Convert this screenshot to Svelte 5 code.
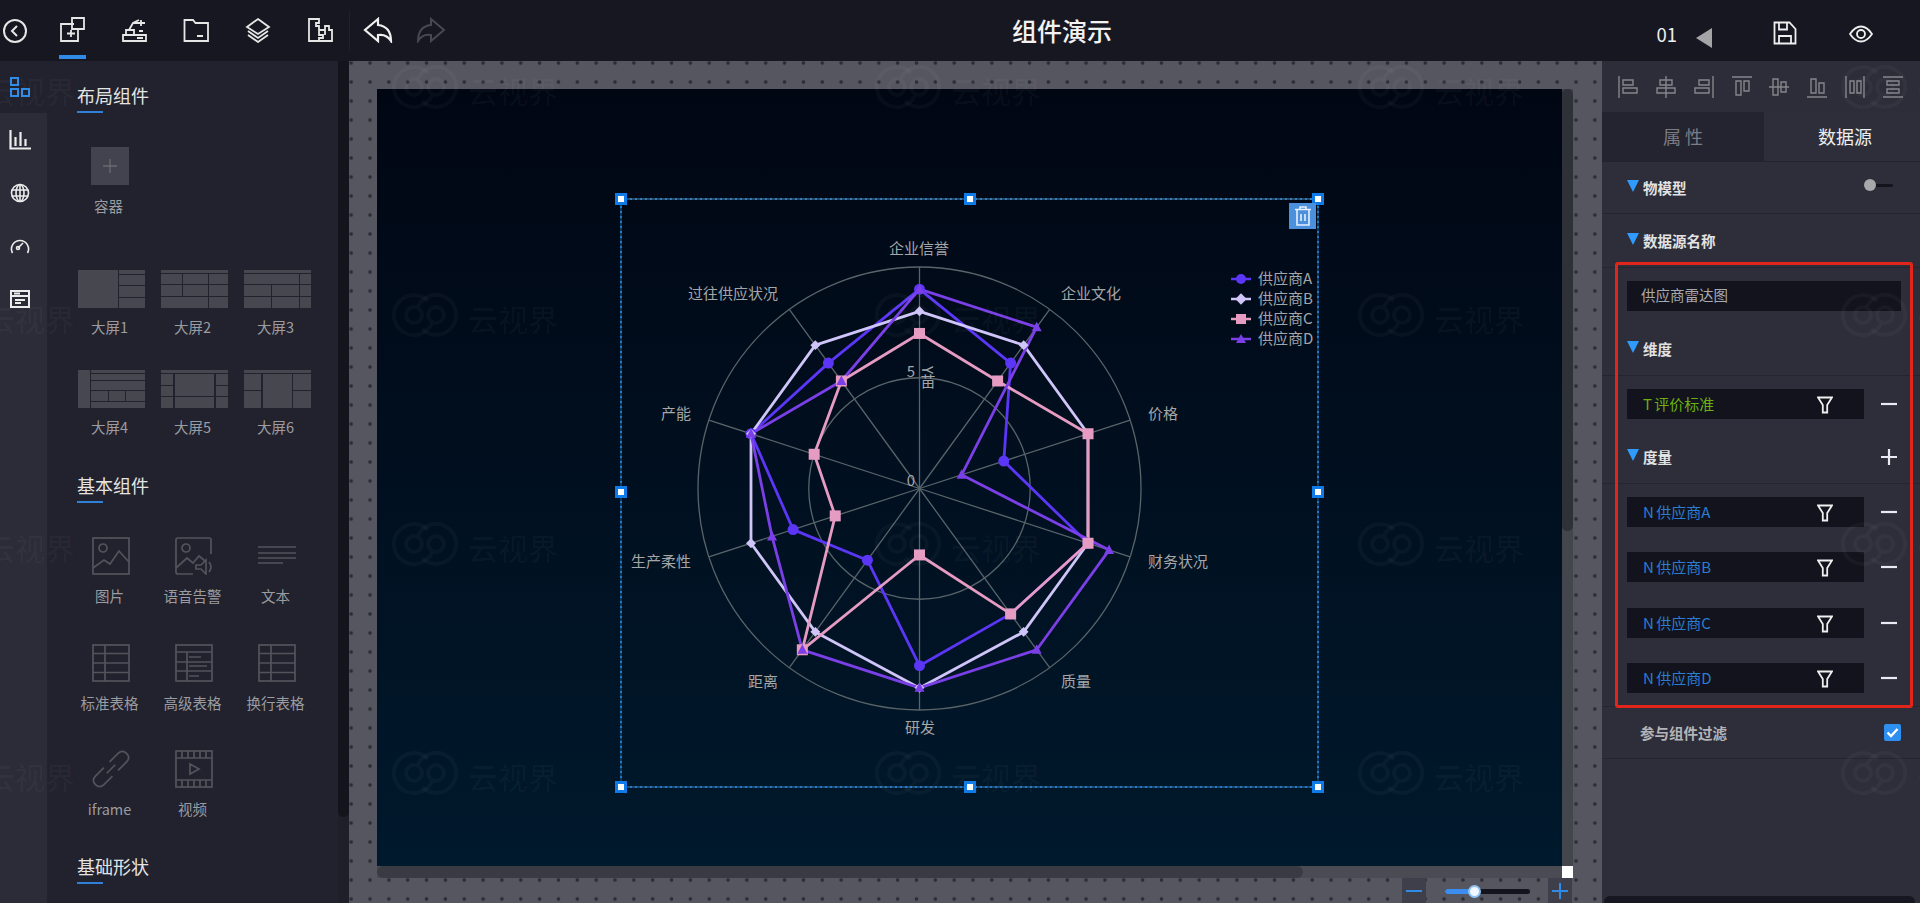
<script>
  const axes = ['企业信誉','企业文化','价格','财务状况','质量','研发','距离','生产柔性','产能','过往供应状况'];
  const labels = [
    { t: axes[0], x: 919, y: 247, a: 'middle' },
    { t: axes[1], x: 1061, y: 292.5, a: 'start' },
    { t: axes[2], x: 1148, y: 412.5, a: 'start' },
    { t: axes[3], x: 1148, y: 560.5, a: 'start' },
    { t: axes[4], x: 1061, y: 680.5, a: 'start' },
    { t: axes[5], x: 920, y: 726.5, a: 'middle' },
    { t: axes[6], x: 778, y: 680.5, a: 'end' },
    { t: axes[7], x: 691, y: 560.5, a: 'end' },
    { t: axes[8], x: 691, y: 412.5, a: 'end' },
    { t: axes[9], x: 778, y: 292.5, a: 'end' }
  ];
  const cx = 919.5, cy = 488.5, R = 221.5;
  const pt = (i, v) => {
    const a = (i * 36 * Math.PI) / 180, r = (v / 10) * R;
    return [cx + r * Math.sin(a), cy - r * Math.cos(a)];
  };
  const series = [
    { name: '供应商A', color: '#5b36f6', kind: 'circle', v: [9,7,4,8,7,8,4,6,8,7] },
    { name: '供应商B', color: '#cfc5f8', kind: 'diamond', v: [8,8,8,8,8,9,8,8,8,8] },
    { name: '供应商C', color: '#e69bc3', kind: 'square', v: [7,6,8,8,7,3,9,4,5,6] },
    { name: '供应商D', color: '#7a3fe6', kind: 'triangle', v: [9,9,2,9,9,9,9,7,8,6] }
  ];
  const poly = (v) => v.map((n, i) => pt(i, n).map((c) => c.toFixed(1)).join(',')).join(' ');
  const handles = [[1,1],[349.5,1],[698,1],[1,294],[698,294],[1,589],[349.5,589],[698,589]];

  const wmX = [-91, 392, 875, 1358, 1841];
  const wmY = [87, 315, 544, 773];
  const ringA = (x, y) => `M${x + 36} ${y - 14}A20 20 0 1 0 ${x + 40} ${y + 8.5}`;
  const ringB = (x, y) => `M${x + 30} ${y + 14}A20 20 0 1 0 ${x + 26} ${y - 8.5}`;

  const screens = [
    { n: '大屏1', r: [[0,0,40,38],[41,0,26,4],[41,5,26,10],[41,16,26,11],[41,28,26,10]] },
    { n: '大屏2', r: [[0,0,67,3],[0,4,21,10],[22,4,25,10],[48,4,19,10],[0,15,21,11],[22,15,25,11],[48,15,19,11],[0,27,47,11],[48,27,19,11]] },
    { n: '大屏3', r: [[0,0,67,3],[0,4,55,10],[56,4,11,10],[0,15,27,11],[28,15,27,11],[56,15,11,11],[0,27,27,11],[28,27,27,11],[56,27,11,11]] },
    { n: '大屏4', r: [[0,0,12,38],[13,0,54,3],[13,4,54,6],[13,11,54,9],[13,21,17,10],[31,21,16,10],[48,21,19,10],[13,32,54,6]] },
    { n: '大屏5', r: [[0,0,67,3],[0,4,12,11],[0,16,12,10],[0,27,12,11],[14,4,39,22],[14,27,39,11],[55,4,12,11],[55,16,12,10],[55,27,12,11]] },
    { n: '大屏6', r: [[0,0,67,3],[0,4,17,16],[0,21,17,17],[19,4,29,34],[49,4,18,16],[49,21,18,17]] }
  ];
  const aligns = [
    'M1 0V22M5 4H15V9H5ZM5 12H19V17H5Z',
    'M10 0V22M4 4H16V9H4ZM1 12H19V17H1Z',
    'M19 0V22M5 4H15V9H5ZM1 12H15V17H1Z',
    'M0 1H20M4 5V19H9V5ZM12 5V15H17V5Z',
    'M0 11H20M4 3V19H9V3ZM12 6V16H17V6Z',
    'M0 21H20M4 3V17H9V3ZM12 7V17H17V7Z',
    'M1 0V22M19 0V22M5 5V17H9V5ZM12 5V17H16V5Z',
    'M0 1H20M0 21H20M4 5H16V9H4ZM4 13H16V17H4Z'
  ];
  const measures = ['供应商A','供应商B','供应商C','供应商D'];
</script>

{#snippet funnel()}
  <svg class="funnel" width="16" height="18" viewBox="0 0 16 18"><path d="M1 1.500H15L10.200 9V16.500H5.800V9Z" /></svg>
{/snippet}

{#snippet tri()}
  <svg class="tri" width="12" height="12" viewBox="0 0 12 12"><path d="M0 0H12L6 12Z" /></svg>
{/snippet}

<div class="app">
  <header class="top">
    <div class="tools">
      <svg class="back" width="24" height="24" viewBox="0 0 24 24"><circle cx="12" cy="12" r="11" /><path d="M14 7L9 12L14 17" /></svg>
      <div class="tool active">
        <svg width="26" height="26" viewBox="0 0 26 26"><path d="M15 7H2V24H19V11M12 13V20M8 16.500H16M13 1H25V12H13Z" /></svg>
      </div>
      <div class="tool">
        <svg width="26" height="26" viewBox="0 0 26 26"><path d="M2 24H25V18H2ZM5 18V13H13V18M8 13L12 6L18 3M12 6H24M20 3V9M16 21H22M18 14H22" /></svg>
      </div>
      <div class="tool">
        <svg width="26" height="26" viewBox="0 0 26 26"><path d="M1.500 3H10L12.500 6H25V24H1.500ZM14 19H20" /></svg>
      </div>
      <div class="tool">
        <svg width="26" height="26" viewBox="0 0 26 26"><path d="M13 2L24 10L13 17L2 10ZM3 14L13 21L23 14M3 18L13 25L23 18" /></svg>
      </div>
      <div class="tool">
        <svg width="26" height="26" viewBox="0 0 26 26"><path d="M2 24V2H12V6H9V9H12V13H18V9H22V13H25V24ZM12 13V18H16V21H12V24M18 13V18" /></svg>
      </div>
      <span class="sep"></span>
      <svg class="undo" width="30" height="26" viewBox="0 0 30 26"><path d="M15 2L2 13L15 24V18C21 17 25 19 28 24C28 15 24 9 15 8Z" /></svg>
      <svg class="redo" width="30" height="26" viewBox="0 0 30 26"><path d="M15 2L28 13L15 24V18C9 17 5 19 2 24C2 15 6 9 15 8Z" /></svg>
    </div>
    <h1>组件演示</h1>
    <div class="top-right">
      <span class="num">01</span>
      <svg class="play" width="16" height="20" viewBox="0 0 16 20"><path d="M16 0V20L0 10Z" /></svg>
      <svg class="save" width="24" height="24" viewBox="0 0 24 24"><path d="M1.500 1.500H16.500L22.500 8V22.500H1.500ZM6 1.500V8.500H14V1.500M6 22.500V15H18V22.500" /></svg>
      <svg class="eye" width="24" height="20" viewBox="0 0 24 20"><path d="M1 10C5 4 8.500 2.500 12 2.500S19 4 23 10C19 16 15.500 17.500 12 17.500S5 16 1 10Z" /><circle cx="12" cy="10" r="4" /></svg>
    </div>
  </header>

  <div class="body">
    <nav class="rail">
      <div class="rail-item on">
        <svg width="20" height="20" viewBox="0 0 20 20"><path d="M1 1H8V8H1ZM1 12H8V19H1ZM12 12H19V19H12Z" /></svg>
      </div>
      <div class="rail-item bars">
        <svg width="22" height="20" viewBox="0 0 22 20"><path d="M1.500 0V18.500H22M6.500 7V16M11.500 2V16M16.500 9V16" /></svg>
      </div>
      <div class="rail-item">
        <svg width="20" height="20" viewBox="0 0 20 20"><circle cx="10" cy="10" r="8.500" /><ellipse cx="10" cy="10" rx="4" ry="8.500" /><path d="M2 7H18M2 13H18M10 1.500V18.500" /></svg>
      </div>
      <div class="rail-item">
        <svg width="20" height="18" viewBox="0 0 20 18"><path d="M2.500 16A8.500 8.500 0 1 1 17.500 16M8 11L13 6" /><circle cx="8" cy="11" r="1.500" /></svg>
      </div>
      <div class="rail-item">
        <svg width="20" height="18" viewBox="0 0 20 18"><path d="M1 1H19V17H1ZM1 6H19M4 3.500H10M5 10H15M5 13H11" /></svg>
      </div>
    </nav>

    <aside class="panel">
      <div class="panel-inner">
        <h3 class="title">布局组件</h3>
        <div class="cells one">
          <div class="cell">
            <div class="plus-tile">
              <svg width="14" height="14" viewBox="0 0 14 14"><path d="M7 0V14M0 7H14" /></svg>
            </div>
            <span>容器</span>
          </div>
        </div>
        <div class="cells screens">
          {#each screens as s}
            <div class="cell">
              <svg class="tile" width="67" height="38" viewBox="0 0 67 38">
                {#each s.r as r}<rect x={r[0]} y={r[1]} width={r[2]} height={r[3]} />{/each}
              </svg>
              <span>{s.n}</span>
            </div>
          {/each}
        </div>
        <h3 class="title t2">基本组件</h3>
        <div class="cells basics">
          <div class="cell">
            <svg class="ic" width="38" height="38" viewBox="0 0 38 38"><rect x="1" y="1" width="36" height="36" /><circle cx="11" cy="11" r="4" /><path d="M1 31L12 23L18 27L27 14L37 25" /></svg>
            <span>图片</span>
          </div>
          <div class="cell">
            <svg class="ic" width="38" height="38" viewBox="0 0 38 38"><path d="M18 37H3Q1 37 1 35V3Q1 1 3 1H34Q36 1 36 3V17" /><circle cx="11" cy="11" r="4" /><path d="M1 31L12 21L18 26L24 19L30 24" /><path d="M21 28H26L31 23V37L26 32H21ZM34 25Q38 30 34 35" /></svg>
            <span>语音告警</span>
          </div>
          <div class="cell">
            <svg class="ic" width="38" height="38" viewBox="0 0 38 38"><path d="M0 10H38M0 16H38M0 21H38M0 26H25" /></svg>
            <span>文本</span>
          </div>
          <div class="cell">
            <svg class="ic" width="38" height="38" viewBox="0 0 38 38"><rect x="1" y="1" width="36" height="36" /><path d="M1 9.500H37M1 19H37M1 28.500H37M13 1V37" /></svg>
            <span>标准表格</span>
          </div>
          <div class="cell">
            <svg class="ic" width="38" height="38" viewBox="0 0 38 38"><rect x="1" y="1" width="36" height="36" /><path d="M1 8H37M12 8V37M1 18H12M1 27H12M12 27H37M12 18H37M14 13H26M14 22H32M14 32H24" /></svg>
            <span>高级表格</span>
          </div>
          <div class="cell">
            <svg class="ic" width="38" height="38" viewBox="0 0 38 38"><rect x="1" y="1" width="36" height="36" /><path d="M1 9.500H37M1 19H37M1 28.500H37M13 1V37" /></svg>
            <span>换行表格</span>
          </div>
          <div class="cell">
            <svg class="ic" width="38" height="38" viewBox="0 0 38 38"><g transform="rotate(-45 19 19)"><path d="M15 13H3Q-3 13 -3 19T3 25H15M23 13H35Q41 13 41 19T35 25H23M13 19H25" /></g></svg>
            <span>iframe</span>
          </div>
          <div class="cell">
            <svg class="ic" width="38" height="38" viewBox="0 0 38 38"><rect x="1" y="1" width="36" height="36" /><path d="M1 8H37M1 30H37M7 1V8M13 1V8M19 1V8M25 1V8M31 1V8M7 30V37M13 30V37M19 30V37M25 30V37M31 30V37M15 14L24 19L15 24Z" /></svg>
            <span>视频</span>
          </div>
        </div>
        <h3 class="title t3">基础形状</h3>
      </div>
      <div class="panel-scroll"><div class="panel-thumb"></div></div>
    </aside>

    <main class="stage">
      <div class="canvas">
        <div class="widget">
          <svg class="chart" width="699" height="590" viewBox="620 198 699 590">
            <g class="grid">
              <circle cx={cx} cy={cy} r={R / 2} />
              <circle cx={cx} cy={cy} r={R} />
              {#each axes as _, i}
                {@const p = pt(i, 10)}
                <line x1={cx} y1={cy} x2={p[0]} y2={p[1]} />
              {/each}
            </g>
            {#each series as s}
              <polygon class="line" points={poly(s.v)} stroke={s.color} />
            {/each}
            {#each series as s}
              {#each s.v as n, i}
                {@const p = pt(i, n)}
                {#if s.kind === 'circle'}
                  <circle cx={p[0]} cy={p[1]} r="5.5" fill={s.color} />
                {:else if s.kind === 'diamond'}
                  <rect x={p[0] - 3.5} y={p[1] - 3.5} width="7" height="7" fill={s.color} transform="rotate(45 {p[0]} {p[1]})" />
                {:else if s.kind === 'square'}
                  <rect x={p[0] - 5.5} y={p[1] - 5.5} width="11" height="11" fill={s.color} />
                {:else}
                  <path d="M{p[0]} {p[1] - 5.5}L{p[0] + 5} {p[1] + 4}H{p[0] - 5}Z" fill={s.color} />
                {/if}
              {/each}
            {/each}
            {#each labels as l}
              <text class="lbl" x={l.x} y={l.y} text-anchor={l.a} dominant-baseline="central">{l.t}</text>
            {/each}
            <text class="lbl" x="911" y="370" text-anchor="middle" dominant-baseline="central">5</text>
            <text class="lbl" x="911" y="479" text-anchor="middle" dominant-baseline="central">0</text>
            <text class="lbl yname" x="928" y="366">Y苗</text>
            {#each series as s, i}
              {@const y = 279 + i * 20}
              <line x1="1231" x2="1251" y1={y} y2={y} stroke={s.color} stroke-width="2.5" />
              {#if s.kind === 'circle'}
                <circle cx="1241" cy={y} r="5" fill={s.color} />
              {:else if s.kind === 'diamond'}
                <rect x="1237" y={y - 4} width="8" height="8" fill={s.color} transform="rotate(45 1241 {y})" />
              {:else if s.kind === 'square'}
                <rect x="1236" y={y - 5} width="10" height="10" fill={s.color} />
              {:else}
                <path d="M1241 {y - 5}L1246 {y + 4}H1236Z" fill={s.color} />
              {/if}
              <text class="lbl" x="1258" y={y - 1.5} dominant-baseline="central">{s.name}</text>
            {/each}
          </svg>
          {#each handles as h}
            <span class="handle" style="left:{h[0] - 6}px;top:{h[1] - 6}px"></span>
          {/each}
          <div class="trash">
            <svg width="18" height="20" viewBox="0 0 18 20"><path d="M1 3.500H17M6 3V1H12V3M3 4V19H15V4M7 8V15M11 8V15" /></svg>
          </div>
        </div>
      </div>
      <div class="vscroll"><div class="vthumb"></div></div>
      <div class="hscroll"><div class="hthumb"></div></div>
      <div class="corner"></div>
      <div class="zoombar">
        <div class="zbtn"><svg width="18" height="14" viewBox="0 0 18 14"><path d="M1 7H17" /></svg></div>
        <div class="slider"><div class="fill"></div><div class="knob"></div></div>
        <div class="zbtn"><svg width="18" height="18" viewBox="0 0 18 18"><path d="M1 9H17M9 1V17" /></svg></div>
      </div>
    </main>

    <aside class="right">
      <div class="aligns">
        {#each aligns as d}
          <svg width="20" height="22" viewBox="0 0 20 22"><path d={d} /></svg>
        {/each}
      </div>
      <div class="tabs">
        <div class="tab off">属 性</div>
        <div class="tab on">数据源</div>
      </div>
      <div class="head h52">
        {@render tri()}<b>物模型</b>
        <div class="switch"><i></i></div>
      </div>
      <div class="head h54">{@render tri()}<b>数据源名称</b></div>
      <div class="group solo">
        <div class="input">供应商雷达图</div>
      </div>
      <div class="head h65">{@render tri()}<b>维度</b></div>
      <div class="group">
        <div class="frow">
          <div class="field green"><span>T 评价标准</span>{@render funnel()}</div>
          <svg class="pm" width="18" height="18" viewBox="0 0 18 18"><path d="M1 9H17" /></svg>
        </div>
      </div>
      <div class="head h65">
        {@render tri()}<b>度量</b>
        <svg class="pm push" width="18" height="18" viewBox="0 0 18 18"><path d="M1 9H17M9 1V17" /></svg>
      </div>
      <div class="group many">
        {#each measures as m}
          <div class="frow">
            <div class="field blue"><span>N {m}</span>{@render funnel()}</div>
            <svg class="pm" width="18" height="18" viewBox="0 0 18 18"><path d="M1 9H17" /></svg>
          </div>
        {/each}
      </div>
      <div class="check-row">
        <b>参与组件过滤</b>
        <div class="check"><svg width="13" height="11" viewBox="0 0 13 11"><path d="M1.500 5.500L5 9L11.500 2" /></svg></div>
      </div>
      <div class="foot"></div>
    </aside>
  </div>

  <svg class="wm" width="1920" height="903" viewBox="0 0 1920 903">
    {#each wmY as y}
      {#each wmX as x}
        <path d={ringA(x, y)} />
        <path d={ringB(x, y)} />
        <circle cx={x + 22} cy={y} r="8" />
        <circle cx={x + 44} cy={y} r="8" />
        <text x={x + 76} y={y + 3} dominant-baseline="central">云视界</text>
      {/each}
    {/each}
  </svg>
  <div class="redbox"></div>
</div>

<style>
  :global(body) { margin: 0; background: #171722; }
  .app {
    position: relative;
    width: 1920px;
    height: 903px;
    overflow: hidden;
    display: grid;
    grid-template-rows: 61px 1fr;
    font-family: "Noto Sans CJK SC", "Noto Sans", sans-serif;
    color: #a9a9ad;
  }
  svg { display: block; fill: none; }

  .top {
    position: relative;
    background: #171722;
    display: flex;
    align-items: center;
    justify-content: space-between;
  }
  .tools { display: flex; align-items: center; padding-left: 3px; height: 100%; }
  .back { stroke: #e6e6e6; stroke-width: 2; margin-right: 31px; }
  .tool {
    width: 62px;
    height: 100%;
    display: flex;
    align-items: center;
    justify-content: flex-start;
    padding-bottom: 2px;
    box-sizing: border-box;
    position: relative;
    left: 1px;
  }
  .tool svg { stroke: #e6e6e6; stroke-width: 1.800; }
  .tool.active::after {
    content: '';
    position: absolute;
    left: 0;
    bottom: 2px;
    width: 27px;
    height: 4px;
    background: #2f8be6;
  }
  .sep { width: 1px; height: 40px; background: #20202b; margin-left: -19px; }
  .undo { stroke: #f0f0f0; stroke-width: 2.200; margin-left: 13px; margin-top: -1px; }
  .redo { stroke: #484853; stroke-width: 2; margin-left: 23px; margin-top: -1px; }
  h1 {
    position: absolute;
    left: 0;
    width: 2124px;
    margin: 0;
    text-align: center;
    font-size: 25px;
    line-height: 61px;
    font-weight: 500;
    color: #f2f2f2;
  }
  .top-right { display: flex; align-items: center; height: 100%; padding-right: 47px; }
  .num { font-size: 18.500px; color: #f0f0f0; margin-top: 7px; }
  .play { fill: #a5a5a8; margin: 15px 0 0 19px; }
  .save { stroke: #eeeeee; stroke-width: 1.800; margin: 4px 0 0 61px; }
  .eye { stroke: #eeeeee; stroke-width: 1.800; margin: 7px 0 0 52px; }

  .body { display: flex; min-height: 0; }
  .rail { width: 47px; background: #2b2c38; flex: none; }
  .rail-item { height: 53px; display: flex; align-items: center; justify-content: center; padding-right: 7px; box-sizing: border-box; }
  .rail-item:first-child { height: 52px; background: #21222d; }
  .rail-item svg { stroke: #ececec; stroke-width: 1.600; }
  .rail-item.on svg { stroke: #2f8be6; stroke-width: 2; }
  .rail-item.bars svg { stroke-width: 2.200; }
  .rail-item:last-child svg { stroke-width: 2; }

  .panel { width: 302px; flex: none; display: flex; background: #21222d; }
  .panel-inner { width: 291px; padding: 21px 0 0 30px; box-sizing: border-box; overflow: hidden; }
  .title {
    margin: 0;
    font-size: 18px;
    line-height: 27px;
    height: 32px;
    font-weight: 400;
    color: #e4e4e4;
  }
  .title::after { content: ''; display: block; width: 26px; height: 2px; margin-top: 2px; background: #2f80d6; }
  .t2 { margin-top: 33px; }
  .t3 { margin-top: 32px; }
  .cells { display: grid; grid-template-columns: repeat(3, 83px); margin-left: -7.500px; }
  .one { margin-top: 33px; margin-left: -8.500px; }
  .screens { margin-top: 52px; row-gap: 31px; }
  .basics { margin-top: 33px; row-gap: 35.500px; }
  .cell { display: flex; flex-direction: column; align-items: center; }
  .cell span { font-size: 14.500px; line-height: 20px; margin-top: 11px; margin-bottom: 2px; margin-right: 3px; color: #9c9ca0; }
  .screens .cell span { margin-top: 9px; }
  .tile rect { fill: #474750; }
  .plus-tile { width: 38px; height: 38px; background: #42434e; display: flex; align-items: center; justify-content: center; }
  .plus-tile svg { stroke: #6a6a72; stroke-width: 1.300; }
  .ic { stroke: #53535c; stroke-width: 1.700; }
  .panel-scroll { width: 11px; background: #1f1f29; }
  .panel-thumb { height: 756px; background: #14141c; border-radius: 0 0 5px 5px; }

  .stage {
    flex: 1;
    min-width: 0;
    position: relative;
    padding: 28px 29px 0 28px;
    box-sizing: border-box;
    display: grid;
    grid-template-columns: 1fr 11px;
    grid-template-rows: 777px 12px 1fr;
    background-color: #565660;
    background-image: radial-gradient(circle, #2c2c35 1.500px, rgba(44,44,53,0) 2.200px);
    background-size: 18.850px 19px;
    background-position: 11.600px -7.500px;
  }
  .canvas { position: relative; background: linear-gradient(180deg, #010613 0%, #00192c 100%); }
  .widget {
    position: absolute;
    left: 243px;
    top: 109px;
    width: 699px;
    height: 590px;
    box-sizing: border-box;
    background-image:
      linear-gradient(90deg, #3a7cb8 50%, #22486a 50%),
      linear-gradient(90deg, #2a76c0 50%, #1a4a74 50%),
      linear-gradient(0deg, #1b79c9 50%, #103a5c 50%),
      linear-gradient(0deg, #1b79c9 50%, #103a5c 50%);
    background-size: 5px 2px, 5px 2px, 2px 5px, 2px 5px;
    background-repeat: repeat-x, repeat-x, repeat-y, repeat-y;
    background-position: 0 0, 0 100%, 0 0, 100% 0;
  }
  .chart { position: absolute; left: 0; top: 0; }
  .grid circle, .grid line { stroke: #59646a; stroke-width: 1.300; fill: none; }
  .line { fill: none; stroke-width: 2.800; stroke-linejoin: round; }
  .lbl { font-size: 15px; fill: #a4a6a8; font-family: "Noto Sans CJK SC", "Noto Sans", sans-serif; }
  .yname { writing-mode: vertical-rl; }
  .handle {
    position: absolute;
    width: 12px;
    height: 12px;
    box-sizing: border-box;
    background: #fff;
    border: 3px solid #0f7be8;
  }
  .trash {
    position: absolute;
    right: 3px;
    top: 5px;
    width: 27px;
    height: 26px;
    background: #4a90dc;
    display: flex;
    align-items: center;
    justify-content: center;
  }
  .trash svg { stroke: #e8f0fa; stroke-width: 1.600; }
  .vscroll { background: #44464e; }
  .vthumb { height: 442px; background: #2f3138; border-radius: 5px; }
  .hscroll { background: rgba(20,20,26,.16); }
  .hthumb { width: 926px; height: 100%; background: #3a3a42; border-radius: 6px; }
  .corner { background: #fff; }
  .zoombar { grid-column: 1 / 3; display: flex; justify-content: flex-end; align-items: stretch; gap: 18.500px; padding-right: 1px; }
  .zbtn { width: 24px; background: #3e3f4b; display: flex; align-items: center; justify-content: center; }
  .zbtn svg { stroke: #2f8be6; stroke-width: 2; }
  .slider { position: relative; width: 85px; height: 5px; margin-top: 11px; background: #14141e; border-radius: 3px; }
  .fill { width: 30px; height: 100%; background: #3b8df0; border-radius: 3px 0 0 3px; }
  .knob {
    position: absolute;
    left: 23px;
    top: -4px;
    width: 13px;
    height: 13px;
    box-sizing: border-box;
    border-radius: 50%;
    background: #f0f7ff;
    border: 2px solid #8cc2f5;
  }

  .right { width: 318px; flex: none; background: #2d2e3a; display: flex; flex-direction: column; }
  .aligns { height: 51px; display: flex; align-items: center; justify-content: space-between; padding: 0 17px 0 16px; background: #2c2d39; box-sizing: border-box; }
  .aligns svg { stroke: #85858c; stroke-width: 1.400; }
  .tabs { display: flex; height: 49px; border-bottom: 1px solid #23232d; }
  .tab { flex: 1; display: flex; align-items: center; justify-content: center; font-size: 18px; padding-bottom: 2px; box-sizing: border-box; color: #eeeeee; }
  .tab.on { padding-left: 6px; }
  .tab.off { flex: none; width: 162px; background: #23242f; color: #7c7c84; }
  .head {
    display: flex;
    align-items: flex-end;
    padding: 0 19px 16px 25px;
    box-sizing: border-box;
    border-bottom: 1px solid #25252f;
  }
  .h52 { height: 52px; padding-bottom: 15px; }
  .h54 { height: 54px; }
  .h65 { height: 65px; }
  .head b { font-size: 14.500px; line-height: 20px; color: #e2e2e2; margin-left: 4px; }
  .tri { fill: #2f9bff; margin-bottom: 6px; flex: none; }
  .switch { margin-left: auto; width: 29px; height: 13px; position: relative; margin-bottom: 6px; margin-right: 8px; }
  .switch::before { content: ''; position: absolute; left: 6px; right: 0; top: 5px; height: 3px; background: #14141e; border-radius: 2px; }
  .switch i { position: absolute; left: 0; top: 0; width: 12px; height: 12px; border-radius: 50%; background: #a8a8aa; }
  .group { padding: 13px 19px 0 25px; display: flex; flex-direction: column; gap: 25.300px; }
  .group.solo { padding-bottom: 0; }
  .group.many { padding-bottom: 13px; border-bottom: 1px solid #25252f; }
  .input { height: 30px; background: #12131d; line-height: 28px; padding-left: 14px; font-size: 14.500px; color: #a9a9ad; }
  .frow { display: flex; align-items: center; justify-content: space-between; }
  .field {
    width: 237px;
    height: 30px;
    background: #12131d;
    display: flex;
    align-items: center;
    justify-content: space-between;
    padding: 0 31px 0 16px;
    box-sizing: border-box;
    font-size: 15px;
    word-spacing: -1px;
  }
  .field span { margin-top: -1px; }
  .green { color: #6bb012; }
  .blue { color: #2a7dd0; }
  .funnel { stroke: #efefef; stroke-width: 1.800; margin-top: 2px; }
  .pm { stroke: #eaeaf2; stroke-width: 2.200; margin-right: 3px; }
  .push { margin-left: auto; margin-bottom: 1px; }
  .check-row {
    height: 52px;
    padding: 0 19px 0 38px;
    display: flex;
    align-items: center;
    justify-content: space-between;
    border-bottom: 1px solid #25252f;
    box-sizing: border-box;
  }
  .check-row b { font-size: 14.500px; color: #b4b4b8; }
  .check { width: 17px; height: 17px; background: #2f8ff0; border-radius: 2px; display: flex; align-items: center; justify-content: center; }
  .check svg { stroke: #fff; stroke-width: 2.400; }
  .foot { margin: auto 5px 0 2px; height: 7px; background: #171722; border-radius: 6px 6px 0 0; }

  .wm { position: absolute; left: 0; top: 0; pointer-events: none; }
  .wm path, .wm circle { fill: none; stroke: rgba(255,255,255,.03); stroke-width: 4; }
  .wm text { font-size: 30px; font-weight: 500; fill: rgba(255,255,255,.032); font-family: "Noto Sans CJK SC", sans-serif; }
  .redbox {
    position: absolute;
    left: 1615px;
    top: 262px;
    width: 298px;
    height: 446px;
    box-sizing: border-box;
    border: 3px solid #e1251b;
    border-radius: 3px;
    pointer-events: none;
  }
</style>
